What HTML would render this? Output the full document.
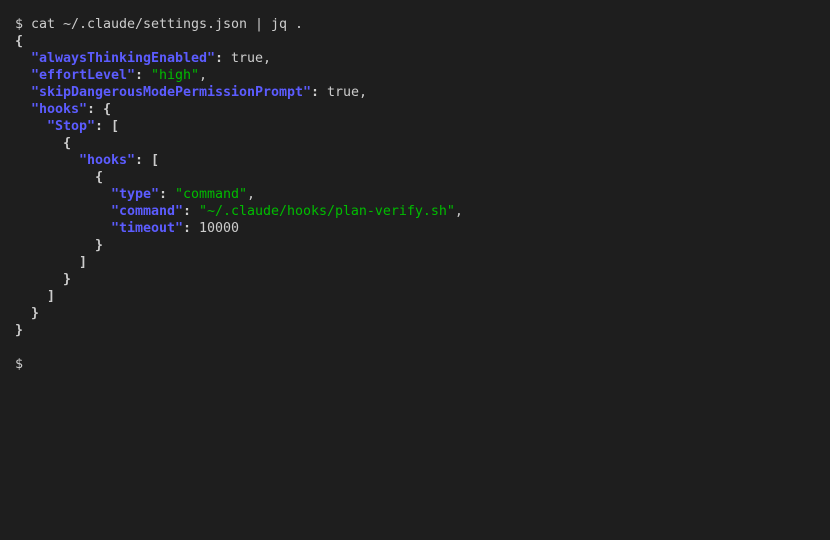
<!DOCTYPE html>
<html>
<head>
<meta charset="utf-8">
<style>
html,body{margin:0;padding:0;width:830px;height:540px;background:#1e1e1e;overflow:hidden}
pre{position:absolute;left:15px;top:16px;margin:0;font-family:"DejaVu Sans Mono","Liberation Mono",monospace;font-size:13.33px;line-height:17px;color:#cccccc;letter-spacing:-0.026px;white-space:pre;filter:blur(0.25px)}
b{color:#5c5cff;font-weight:bold}
i{font-style:normal;color:#00bc00}
u{text-decoration:none;font-weight:bold;color:#cccccc}
</style>
</head>
<body>
<pre>$ cat ~/.claude/settings.json | jq .
<u>{</u>
  <b>"alwaysThinkingEnabled"</b><u>:</u> true,
  <b>"effortLevel"</b><u>:</u> <i>"high"</i>,
  <b>"skipDangerousModePermissionPrompt"</b><u>:</u> true,
  <b>"hooks"</b><u>:</u> <u>{</u>
    <b>"Stop"</b><u>:</u> <u>[</u>
      <u>{</u>
        <b>"hooks"</b><u>:</u> <u>[</u>
          <u>{</u>
            <b>"type"</b><u>:</u> <i>"command"</i>,
            <b>"command"</b><u>:</u> <i>"~/.claude/hooks/plan-verify.sh"</i>,
            <b>"timeout"</b><u>:</u> 10000
          <u>}</u>
        <u>]</u>
      <u>}</u>
    <u>]</u>
  <u>}</u>
<u>}</u>

$</pre>
</body>
</html>
